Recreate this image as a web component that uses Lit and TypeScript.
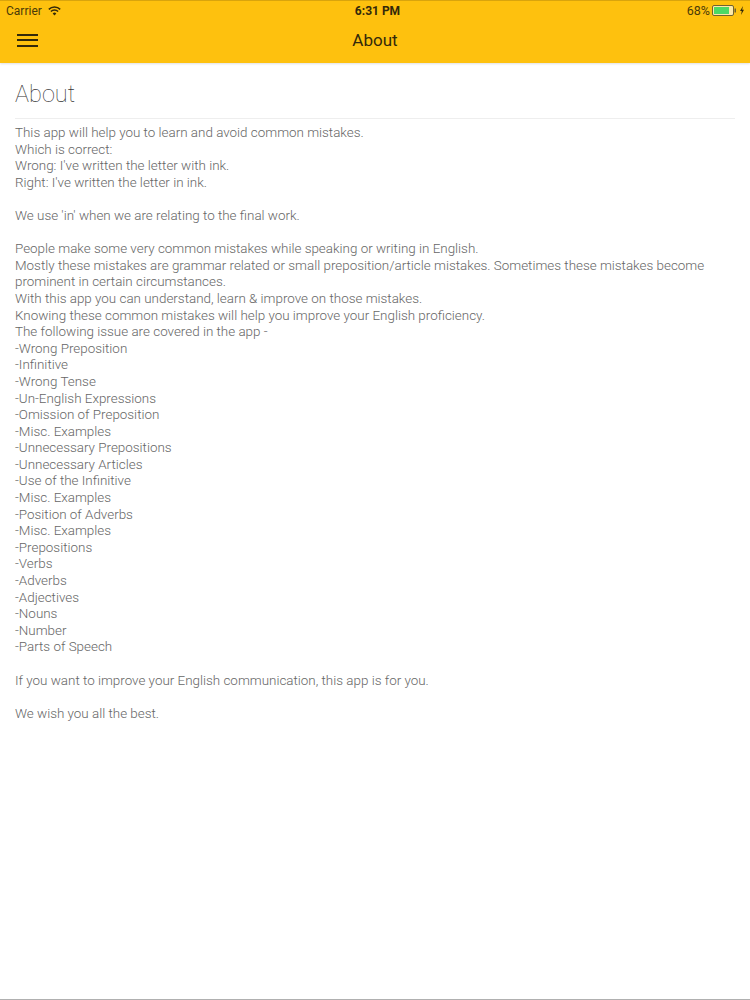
import { LitElement, html, css } from "lit";
import { customElement } from "lit/decorators.js";

const LINES = [
  "This app will help you to learn and avoid common mistakes.",
  "Which is correct:",
  "Wrong: I've written the letter with ink.",
  "Right: I've written the letter in ink.",
  "",
  "We use 'in' when we are relating to the final work.",
  "",
  "People make some very common mistakes while speaking or writing in English.",
  "Mostly these mistakes are grammar related or small preposition/article mistakes. Sometimes these mistakes become prominent in certain circumstances.",
  "With this app you can understand, learn & improve on those mistakes.",
  "Knowing these common mistakes will help you improve your English proficiency.",
  "The following issue are covered in the app -",
  "-Wrong Preposition",
  "-Infinitive",
  "-Wrong Tense",
  "-Un-English Expressions",
  "-Omission of Preposition",
  "-Misc. Examples",
  "-Unnecessary Prepositions",
  "-Unnecessary Articles",
  "-Use of the Infinitive",
  "-Misc. Examples",
  "-Position of Adverbs",
  "-Misc. Examples",
  "-Prepositions",
  "-Verbs",
  "-Adverbs",
  "-Adjectives",
  "-Nouns",
  "-Number",
  "-Parts of Speech",
  "",
  "If you want to improve your English communication, this app is for you.",
  "",
  "We wish you all the best.",
];

@customElement("app-root")
export class AppRoot extends LitElement {
  static styles = css`
    :host {
      display: block;
      box-sizing: border-box;
      width: 750px;
      height: 1000px;
      background: #fff;
      border-bottom: 1px solid #b0b0b0;
      font-family: Roboto, "Liberation Sans", sans-serif;
      overflow: hidden;
    }
    .bar {
      background: #fec10e;
      height: 63px;
      border-top: 1px solid #d9a40c;
      box-sizing: border-box;
      box-shadow: 0 1px 2px rgba(0, 0, 0, 0.12);
      display: flex;
      flex-direction: column;
    }
    .status {
      height: 19px;
      display: grid;
      grid-template-columns: 1fr auto 1fr;
      align-items: center;
      padding: 0 5px 0 6px;
      font-family: Roboto, "Liberation Sans", sans-serif;
      font-size: 12px;
      color: #4a3a08;
    }
    .left {
      display: flex;
      align-items: center;
      gap: 6px;
    }
    .time {
      font-weight: 700;
      color: #33290a;
      padding-left: 4px;
    }
    .right {
      display: flex;
      align-items: center;
      justify-content: flex-end;
      gap: 2px;
      font-size: 12.5px;
    }
    .nav {
      flex: 1;
      display: grid;
      grid-template-columns: 1fr auto 1fr;
      align-items: center;
      padding: 0 17px 3px;
    }
    .title {
      font-family: Roboto, "Liberation Sans", sans-serif;
      font-size: 17px;
      color: #33290a;
    }
    .menu {
      display: flex;
      flex-direction: column;
      gap: 3.5px;
    }
    .menu span {
      width: 21px;
      height: 2px;
      background: #33290a;
    }
    .content {
      padding: 0 15px;
    }
    h1 {
      margin: 0;
      padding: 16px 0 8px;
      font-weight: 100;
      font-size: 23.5px;
      line-height: 31px;
      color: #333;
      border-bottom: 1px solid #eee;
    }
    .text {
      margin-top: 6px;
      font-weight: 300;
      font-size: 13.42px;
      line-height: 16.6px;
      color: #666;
    }
    .line {
      min-height: 16.6px;
    }
  `;

  render() {
    return html`
      <div class="bar">
        <div class="status">
          <div class="left">
            <span>Carrier</span>
            <svg width="13" height="10" viewBox="0 0 13 10" fill="none" stroke="#33290a" stroke-width="1.5">
              <path d="M0.8 3.4 A8 8 0 0 1 12.2 3.4"></path>
              <path d="M2.9 5.5 A5 5 0 0 1 10.1 5.5"></path>
              <path d="M6.5 9.6 L4.7 7.4 A2.6 2.6 0 0 1 8.3 7.4 Z" fill="#33290a" stroke="none"></path>
            </svg>
          </div>
          <span class="time">6:31 PM</span>
          <div class="right">
            <span>68%</span>
            <svg width="33" height="11" viewBox="0 0 33 11">
              <rect x="0.5" y="0.5" width="21" height="10" rx="1.5" fill="#fde9a8" stroke="#6f6330"></rect>
              <rect x="2" y="2" width="15" height="7" fill="#4cd964"></rect>
              <rect x="22.5" y="3.5" width="1.5" height="4" fill="#6f6330"></rect>
              <path d="M31 1 L28 6 H29.8 L29 10 L32 4.8 H30.2 Z" fill="#33290a"></path>
            </svg>
          </div>
        </div>
        <div class="nav">
          <div class="menu"><span></span><span></span><span></span></div>
          <div class="title">About</div>
        </div>
      </div>
      <div class="content">
        <h1>About</h1>
        <div class="text">
          ${LINES.map((l) => html`<div class="line">${l}</div>`)}
        </div>
      </div>
    `;
  }
}
